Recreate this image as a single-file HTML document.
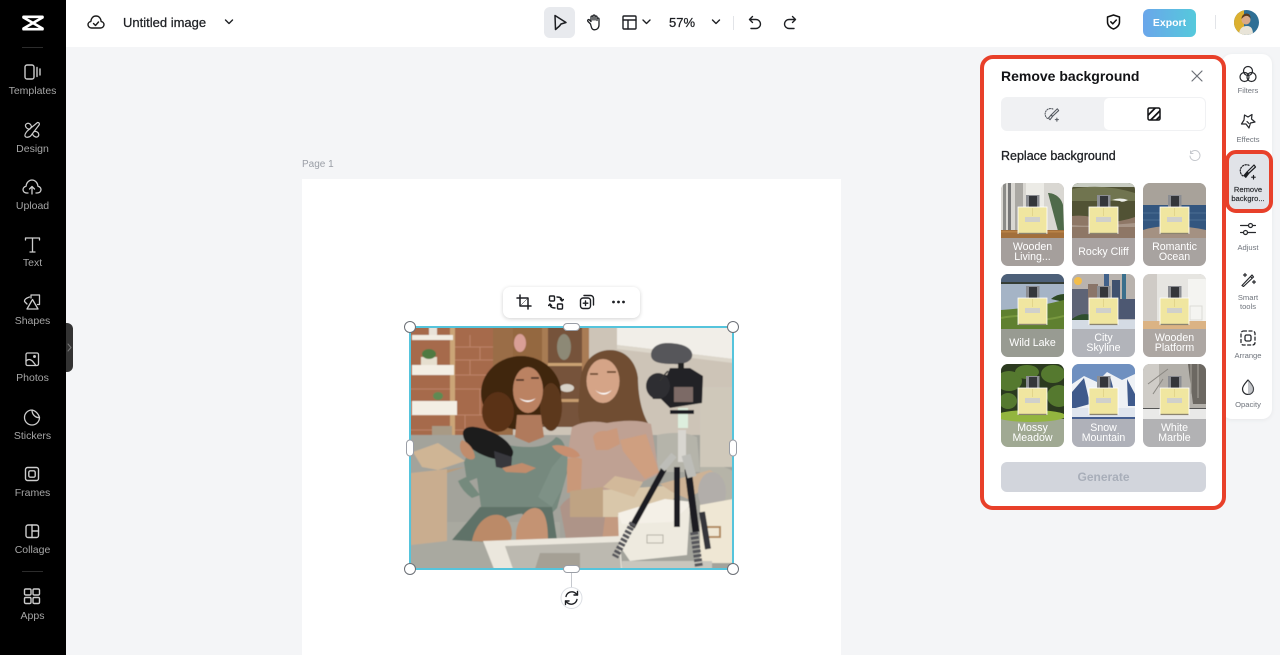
<!DOCTYPE html>
<html><head><meta charset="utf-8"><title>Remove background</title>
<style>
*{box-sizing:border-box;margin:0;padding:0}
html,body{width:1280px;height:655px;overflow:hidden;background:#f4f5f7;font-family:"Liberation Sans",sans-serif}
.a{position:absolute}
.side{left:0;top:0;width:66px;height:655px;background:#000}
.sl{position:absolute;left:0;width:65px;text-align:center;font-size:10.5px;color:#a6a6a6;line-height:12px;white-space:nowrap}
.rl{position:absolute;left:1225px;width:46px;text-align:center;font-size:7.6px;color:#6f747c;line-height:8px;white-space:nowrap}
.ic{position:absolute;fill:none;stroke-linecap:round;stroke-linejoin:round}
.th{position:absolute;width:63px;height:83px;border-radius:7px;overflow:hidden}
.th svg{position:absolute;left:0;top:0}
.lb{position:absolute;left:0;right:0;top:55px;height:28px;display:flex;align-items:center;justify-content:center;text-align:center;color:#fff;font-size:10.6px;line-height:10.5px}
</style></head><body>
<svg width="0" height="0" style="position:absolute"><defs>
<symbol id="bt" viewBox="0 0 63 83">
<rect x="25" y="12" width="13.500" height="12" fill="#8b8d92"/>
<rect x="28" y="13" width="8" height="11" fill="#34363a"/>
<rect x="17" y="24" width="29" height="26.500" fill="#f0e6a0" stroke="#fff" stroke-width=".8"/>
<rect x="17.500" y="49.800" width="28" height="1.300" fill="#8b8470"/>
<rect x="24" y="34" width="15" height="5" fill="#d0d0cb"/>
<line x1="31.500" y1="25" x2="31.500" y2="33" stroke="#cdbb6c" stroke-width=".4"/>
</symbol></defs></svg>

<!-- sidebar -->
<div class="a side"></div>
<svg class="a" style="left:21px;top:14px" width="24" height="18" viewBox="0 0 24 18"><g fill="none" stroke="#fff" stroke-width="2.600" stroke-linecap="round"><path d="M2.500 2.800H21.500M2.500 15.200H21.500M2.500 3.500 21.500 14.500M21.500 3.500 2.500 14.500"/></g></svg>
<div class="a" style="left:22px;top:47px;width:21px;height:1px;background:#2c2c2c"></div>
<div class="a" style="left:22px;top:571px;width:21px;height:1px;background:#2c2c2c"></div>

<svg class="ic" style="left:23px;top:63px" width="20" height="18" viewBox="0 0 20 18" stroke="#ccc" stroke-width="1.400"><rect x="2" y="2" width="9" height="14" rx="2"/><path d="M14 4.500v9M17 6v6"/></svg>
<div class="sl" style="top:85px">Templates</div>
<svg class="ic" style="left:23px;top:121px" width="18" height="18" viewBox="0 0 18 18" stroke="#ccc" stroke-width="1.200"><path d="M4 2.500C6 1.500 8 3.500 8.500 5.500L7 8C5 8.500 3 7 2.500 5c-.2-1 .5-2 1.500-2.500z"/><path d="M14.500 1.500c1.500-.2 2.200 1 1.700 2.300L8 14.500c-1.500 2-5.500 2.500-6 .5s2-5 4-6.500z"/><path d="M11 10.500c2-.5 4.200.5 4.700 2.500s-1.200 3.500-3 3-3-2-3.200-3.500"/></svg>
<div class="sl" style="top:143px">Design</div>
<svg class="ic" style="left:22px;top:178px" width="20" height="18" viewBox="0 0 20 18" stroke="#ccc" stroke-width="1.300"><path d="M6 15H5c-3 0-4-2-4-3.500S2.500 8.500 4 8.300C4.500 4.500 7 2 10 2s5.500 2.500 6 6.300c1.500.2 3 1.600 3 3.200S18 15 15 15h-1"/><path d="M10 16V9M7.500 11 10 8.500l2.500 2.500"/></svg>
<div class="sl" style="top:200px">Upload</div>
<svg class="ic" style="left:24px;top:236px" width="17" height="18" viewBox="0 0 17 18" stroke="#ccc" stroke-width="1.300"><path d="M1.500 4V2h14v2M8.500 2v14M6 16h5"/></svg>
<div class="sl" style="top:257px">Text</div>
<svg class="ic" style="left:23px;top:293px" width="18" height="18" viewBox="0 0 18 18" stroke="#ccc" stroke-width="1.300"><path d="M8 5V2h8.500v9.500h-2M6.500 4C3.500 5 1 6.500 1.500 8.500L4 11"/><path d="M9.500 6.500 15 16H4z"/></svg>
<div class="sl" style="top:315px">Shapes</div>
<svg class="ic" style="left:24px;top:351px" width="16" height="16" viewBox="0 0 16 16" stroke="#ccc" stroke-width="1.300"><rect x="2" y="2" width="12.500" height="12.500" rx="1.500"/><path d="M2 10c3-3 6-1 8 2l2 2.500"/><circle cx="10.500" cy="5.500" r=".8" fill="#ccc"/></svg>
<div class="sl" style="top:372px">Photos</div>
<svg class="ic" style="left:23px;top:408px" width="18" height="18" viewBox="0 0 18 18" stroke="#ccc" stroke-width="1.300"><path d="M9 2a7.500 7.500 0 1 0 7.500 7.500C12.500 10 9 6.500 9 2zM9 2c3 .5 6.500 3.500 7.500 7.500"/></svg>
<div class="sl" style="top:430px">Stickers</div>
<svg class="ic" style="left:24px;top:466px" width="16" height="16" viewBox="0 0 16 16" stroke="#ccc" stroke-width="1.400"><rect x="1.500" y="1.500" width="13" height="13" rx="2"/><rect x="4.800" y="4.800" width="6.400" height="6.400" rx="1.500"/></svg>
<div class="sl" style="top:487px">Frames</div>
<svg class="ic" style="left:24px;top:523px" width="16" height="16" viewBox="0 0 16 16" stroke="#ccc" stroke-width="1.400"><rect x="2" y="2" width="12.500" height="12.500" rx="2"/><path d="M8 2v12.500M8 8h6.500"/></svg>
<div class="sl" style="top:544px">Collage</div>
<svg class="ic" style="left:23px;top:588px" width="18" height="17" viewBox="0 0 18 17" stroke="#ccc" stroke-width="1.400"><rect x="1.500" y="1" width="6.500" height="6" rx="1.200"/><rect x="10" y="1" width="6.500" height="6" rx="1.200"/><rect x="1.500" y="9.500" width="6.500" height="6" rx="1.200"/><rect x="10" y="9.500" width="6.500" height="6" rx="1.200"/></svg>
<div class="sl" style="top:610px">Apps</div>
<div class="a" style="left:66px;top:323px;width:7px;height:49px;background:#333;border-radius:0 6px 6px 0"></div>
<svg class="ic" style="left:67px;top:343px" width="5" height="9" viewBox="0 0 5 9" stroke="#777" stroke-width="1"><path d="M1 1l3 3.500L1 8"/></svg>

<!-- top bar -->
<div class="a" style="left:66px;top:0;width:1214px;height:47px;background:#fff"></div>
<svg class="ic" style="left:87px;top:14px" width="18" height="16" viewBox="0 0 18 16" stroke="#1a1a1a" stroke-width="1.400"><path d="M4.500 14C2.500 14 1 12.500 1 10.800S2.300 7.800 3.800 7.600C4.200 4 6.300 2 9 2s4.800 2 5.200 5.600c1.500.2 2.800 1.500 2.800 3.200S15.500 14 13.500 14z"/><path d="M6.500 9.500 8.500 11.500 11.500 8"/></svg>
<div class="a" style="left:123px;top:15px;font-size:13px;line-height:16px;color:#1d1f23;-webkit-text-stroke:.25px #1d1f23;white-space:nowrap">Untitled image</div>
<svg class="ic" style="left:224px;top:18px" width="10" height="8" viewBox="0 0 10 8" stroke="#1d1f23" stroke-width="1.400"><path d="M1.500 2 5 5.500 8.500 2"/></svg>
<div class="a" style="left:544px;top:7px;width:31px;height:31px;background:#e8eaee;border-radius:6px"></div>
<svg class="ic" style="left:552px;top:14px" width="16" height="17" viewBox="0 0 16 17" stroke="#1d1f23" stroke-width="1.500"><path d="M3 1.500 14 8.500 9 10 7.500 12 3.500 15.500z"/></svg>
<svg class="ic" style="left:586px;top:14px" width="16" height="17" viewBox="0 0 16 17" stroke="#1d1f23" stroke-width="1.300"><path d="M4.500 10 2 7.500C1 6 2.500 5 3.500 6L5 7.500V3c0-1.300 2-1.300 2 0v3-4c0-1.300 2-1.300 2 0v4-3c0-1.300 2-1.300 2 0v3.500-1.500c0-1.300 2-1.300 2 0v6c0 3-2 4.800-4.500 4.800S5.500 14 4.500 10z"/></svg>
<svg class="ic" style="left:622px;top:15px" width="15" height="15" viewBox="0 0 15 15" stroke="#1d1f23" stroke-width="1.400"><rect x="1" y="1" width="13" height="13" rx="1"/><path d="M1 5h13M6 5v9"/></svg>
<svg class="ic" style="left:642px;top:18px" width="9" height="8" viewBox="0 0 9 8" stroke="#1d1f23" stroke-width="1.400"><path d="M1 2l3.500 3.500L8 2"/></svg>
<div class="a" style="left:669px;top:15px;font-size:13px;line-height:16px;color:#1d1f23;-webkit-text-stroke:.25px #1d1f23">57%</div>
<svg class="ic" style="left:711px;top:18px" width="10" height="8" viewBox="0 0 10 8" stroke="#1d1f23" stroke-width="1.400"><path d="M1.500 2 5 5.500 8.500 2"/></svg>
<div class="a" style="left:733px;top:16px;width:1px;height:14px;background:#e2e4e8"></div>
<svg class="ic" style="left:748px;top:15px" width="14" height="15" viewBox="0 0 14 15" stroke="#1d1f23" stroke-width="1.400"><path d="M4.500 1.500 1.500 4.500l3 3M1.500 4.500H8a4.500 4.500 0 0 1 0 9H3"/></svg>
<svg class="ic" style="left:783px;top:15px" width="14" height="15" viewBox="0 0 14 15" stroke="#1d1f23" stroke-width="1.400"><path d="M9.500 1.500l3 3-3 3M12.500 4.500H6a4.500 4.500 0 0 0 0 9h5"/></svg>
<svg class="ic" style="left:1106px;top:14px" width="15" height="16" viewBox="0 0 15 16" stroke="#111" stroke-width="1.500"><path d="M7.500 1 13.500 3v5c0 3.500-3 6-6 7-3-1-6-3.500-6-7V3z"/><path d="M4.800 7.800 6.800 9.800 10.300 6"/></svg>
<div class="a" style="left:1143px;top:9px;width:53px;height:28px;border-radius:6px;background:linear-gradient(90deg,#6aa6ea,#55c9dc);color:#fff;font-size:10.500px;font-weight:bold;line-height:28px;text-align:center">Export</div>
<div class="a" style="left:1215px;top:15px;width:1px;height:14px;background:#e2e4e8"></div>
<svg class="a" style="left:1234px;top:10px" width="25" height="25" viewBox="0 0 25 25"><defs><clipPath id="av"><circle cx="12.500" cy="12.500" r="12.500"/></clipPath></defs><g clip-path="url(#av)"><rect width="25" height="25" fill="#2f6f95"/><rect width="10" height="25" fill="#dcb030"/><path d="M5 25c0-6 3-9 8-9s6 4 6 9z" fill="#e8e4d8"/><circle cx="12" cy="10" r="4.500" fill="#d9a988"/><path d="M7.500 9c0-4 3-5.500 5-5.500s4.500 1.500 4 5c-1-2-3-3-5-2.500S8.500 8 7.500 9z" fill="#5a3c22"/></g></svg>

<!-- page -->
<div class="a" style="left:302px;top:159px;font-size:10px;line-height:12px;color:#9a9ea6">Page 1</div>
<div class="a" style="left:302px;top:179px;width:539px;height:476px;background:#fff"></div>

<!-- photo -->
<svg class="a" style="left:410px;top:327px" width="323" height="242" viewBox="0 0 323 242">
<defs><filter id="bl" x="-5%" y="-5%" width="110%" height="110%"><feGaussianBlur stdDeviation=".6"/></filter></defs>
<g filter="url(#bl)">
<!-- walls -->
<rect width="323" height="242" fill="#cdc4b7"/>
<polygon points="207,0 323,0 323,32 207,18" fill="#f1eee8"/>
<polygon points="207,18 323,32 323,36 207,22" fill="#dcd6ca"/>
<rect x="0" width="85" height="130" fill="#a66a4c"/>
<g stroke="#bd8468" stroke-width="1"><path d="M43 20h42M43 33h42M43 48h42M0 62h85M0 88h85M0 103h85M60 8v12M70 20v13M60 33v15M70 62v26M55 88v15"/></g>
<rect x="83" width="20" height="110" fill="#9a6d47"/>
<rect x="103" width="75" height="100" fill="#76533a"/>
<rect x="132" width="6" height="60" fill="#a87b52"/>
<rect x="103" width="29" height="40" fill="#946840"/>
<rect x="138" y="36" width="40" height="3" fill="#cba273"/>
<rect x="138" y="72" width="34" height="3" fill="#c69b6e"/>
<rect x="172" width="7" height="85" fill="#a97c55"/>
<ellipse cx="154" cy="20" rx="7" ry="13" fill="#8d8976"/>
<ellipse cx="157" cy="61" rx="7" ry="4" fill="#d8d2c8"/>
<ellipse cx="110" cy="16" rx="6" ry="9" fill="#d99f96"/>
<!-- left shelves -->
<rect x="40" y="0" width="5" height="115" fill="#cba577"/>
<rect x="2" y="8" width="41" height="5" fill="#f1ece2"/>
<rect x="2" y="38" width="42" height="10" fill="#f3eee4"/>
<rect x="2" y="74" width="45" height="14" fill="#f3eee4"/>
<rect x="11" y="30" width="16" height="8" fill="#e6dfcf"/><ellipse cx="19" cy="27" rx="7" ry="5" fill="#4f7a42"/>
<ellipse cx="28" cy="69" rx="5" ry="4" fill="#5f8a52"/>
<rect x="22" y="99" width="20" height="12" fill="#a89a85"/>
<rect x="19" y="0" width="8" height="8" fill="#e8e2d8"/>
<!-- sofa -->
<rect x="0" y="108" width="323" height="134" fill="#a3a39b"/>
<rect x="0" y="195" width="150" height="47" fill="#a9a9a0"/>
<path d="M247 108q25-5 40 2l3 35h-43z" fill="#b5b4aa"/>
<path d="M290 140q20-4 33 4v36h-33z" fill="#b6b4a8"/>
<rect x="290" y="60" width="33" height="80" fill="#cfc8ba"/>
<!-- left woman -->
<ellipse cx="111" cy="66" rx="40" ry="37" fill="#41250f"/>
<ellipse cx="88" cy="85" rx="16" ry="20" fill="#5a3218"/>
<ellipse cx="141" cy="80" rx="11" ry="24" fill="#5c371c"/>
<path d="M107 88h24l3 22-15 6-14-6z" fill="#b07a5b"/>
<ellipse cx="118" cy="63" rx="15" ry="23" fill="#bb8262"/>
<path d="M109 71q9 5 17 0q-8 8-17 0z" fill="#fff"/>
<path d="M106 53h8M121 51h8" stroke="#3a2416" stroke-width="1.500"/>
<!-- right woman -->
<path d="M170 60c0-26 15-37 30-37 16 0 26 12 28 28 0 18 4 35 10 45l-35 3-32-1c-5-12-2-26-1-38z" fill="#6f4e33"/>
<ellipse cx="193" cy="54" rx="16.500" ry="22" fill="#d5a487"/>
<path d="M185 63q8 6 17 0q-8 9-17 0z" fill="#fff"/>
<path d="M180 47h8M197 45h9" stroke="#5a3a22" stroke-width="1.500"/>
<!-- right woman dress -->
<path d="M162 100q15-8 35-4 28-5 44 1l8 50-32 15-35 8-20-6-5-34z" fill="#bfa193"/>
<path d="M150 180q8-12 20-12l40 2-2 42h-52z" fill="#ae9488"/>
<path d="M157 132q8-3 15 0l-1 32-14 2z" fill="#c99879"/>
<path d="M210 113l26-6 13 38-14 7-22-28z" fill="#cf9f80"/>
<path d="M183 110q3-7 14-6l10-3 3 16-12 6h-12z" fill="#cb997b"/>
<!-- left woman dress -->
<path d="M82 112q12 8 38 8 18 0 26-10 8 2 10 14l1 22-10 35-6 6H72l-5-36-10 4-3-20q8-19 28-23z" fill="#76897e"/>
<path d="M56 150l-8 4q4 10 14 17l8-3z" fill="#748a7d"/>
<path d="M157 122q2 20-4 38l-11 20-14-10 14-30z" fill="#7e9186"/>
<path d="M70 180h72l5 33-20 1-15-28-15 4-20 25-35-2z" fill="#5f7268"/>
<!-- legs -->
<path d="M62 214c3-16 14-28 27-26 10 2 13 12 13 20l-2 8z" fill="#bb8a68"/>
<path d="M106 206c2-16 12-26 20-25 9 1 12 14 12 32l-32 1z" fill="#c49373"/>
<path d="M195 190c8-2 14 0 20 4l-6 22-17-2z" fill="#c49a80"/>
<!-- hat -->
<path d="M53 108c-1-6 4-9 12-8 16 2 34 12 38 24 1 6-4 9-8 9-16 0-40-10-42-25z" fill="#1c1c1e"/>
<path d="M84 124l18 6-1 13-15-3z" fill="#37373c"/>
<path d="M52 113c-3 3-3 11 2 16 4 4 10 5 11 1-1-8-6-14-13-17z" fill="#c08c6c"/>
<path d="M92 141l20-5 14 5-10 5-20-1z" fill="#c08c6c"/>
<path d="M142 119c7-3 26 2 28 10-6 4-22 0-28-10z" fill="#c88f70"/>
<!-- boxes -->
<polygon points="1,146 37,142 37,214 1,218" fill="#c9ad8f"/>
<polygon points="3,125 28,116 55,134 28,143 12,140" fill="#cfb595"/>
<polygon points="37,143 55,140 37,146" fill="#b89b7b"/>
<polygon points="160,164 193,160 193,190 160,190" fill="#bfa383"/>
<polygon points="193,163 270,158 255,190 193,190" fill="#d9c7aa"/>
<polygon points="193,160 205,149 233,155 224,170" fill="#d2b99a"/>
<polygon points="250,157 300,143 312,150 278,172 262,165" fill="#cdb295"/>
<ellipse cx="302" cy="165" rx="14" ry="20" fill="#b2aeaa"/>
<!-- white boxes -->
<polygon points="208,188 255,172 280,178 277,228 220,234 209,218" fill="#eeeadf"/>
<polygon points="208,186 255,172 283,175 262,195 212,197" fill="#f4f0e7"/>
<rect x="237" y="208" width="16" height="8" fill="none" stroke="#b4b0a6"/>
<polygon points="290,178 323,172 323,236 290,236" fill="#efe7d4"/>
<rect x="296" y="200" width="14" height="10" fill="none" stroke="#b0885c" stroke-width="2"/>
<!-- table -->
<polygon points="73,214 210,209 212,242 84,242" fill="#ebe7dd"/>
<polygon points="95,219 209,215 211,242 103,242" fill="#bcb9b0"/>
<path d="M130 226h40v16h-45z" fill="#a5a095"/>
<rect x="212" y="234" width="90" height="8" fill="#c9c6bd"/>
<!-- tripod -->
<g stroke-linecap="butt" fill="none">
<path d="M254 142 222 200" stroke="#1e1e20" stroke-width="6"/>
<path d="M223 196 205 230" stroke="#55555a" stroke-width="7" stroke-dasharray="3 1.500"/>
<path d="M267 140V200" stroke="#1e1e20" stroke-width="6"/>
<path d="M278 142 286 205" stroke="#1e1e20" stroke-width="7"/>
<path d="M284 205 289 240" stroke="#55555a" stroke-width="8" stroke-dasharray="3 1.500"/>
<path d="M292 185 298 222" stroke="#35353a" stroke-width="6"/>
<path d="M272 103V135" stroke="#d8d6d0" stroke-width="8"/>
<path d="M264 128 252 142" stroke="#bdbdb8" stroke-width="7"/>
<path d="M276 128 282 150" stroke="#bdbdb8" stroke-width="9"/>
</g>
<rect x="268" y="81" width="10" height="20" fill="#ded" />
<!-- camera -->
<path d="M242 48h15l3-7h20l13 8-1 27-32 5-9-9h-8l-6-12z" fill="#232326"/>
<ellipse cx="248" cy="59" rx="12" ry="13" fill="#2f2f33"/>
<rect x="264" y="60" width="19" height="15" fill="#7b6a66"/>
<path d="M241 28c0-8 8-12 16-12 12 0 23 3 25 10 2 8-8 12-18 11-12 0-23-1-23-9z" fill="#56565a"/>
<rect x="268" y="36" width="6" height="7" fill="#222"/>
<path d="M258 44q-5 5-8 10" stroke="#333" stroke-width="1.500" fill="none"/>
<rect x="260" y="83" width="24" height="4" fill="#1d1d20"/>
</g></svg>
<!-- selection -->
<div class="a" style="left:409px;top:326px;width:325px;height:244px;border:2px solid #55c4dc"></div>
<svg class="a" style="left:400px;top:317px" width="345" height="300" viewBox="0 0 345 300">
<g fill="#fff" stroke="#6b6f76" stroke-width="1">
<circle cx="10" cy="10" r="5.500"/><circle cx="333" cy="10" r="5.500"/><circle cx="10" cy="252" r="5.500"/><circle cx="333" cy="252" r="5.500"/>
</g>
<g fill="#fff" stroke="#9a9ea6" stroke-width="1">
<rect x="163.500" y="6.500" width="16" height="7" rx="3.500"/><rect x="163.500" y="248.500" width="16" height="7" rx="3.500"/>
<rect x="6.500" y="123" width="7" height="16" rx="3.500"/><rect x="329.500" y="123" width="7" height="16" rx="3.500"/>
</g>
<line x1="171.500" y1="256" x2="171.500" y2="271" stroke="#c5c8ce"/>
<circle cx="171.500" cy="281" r="10.500" fill="#fff" stroke="#dcdfe4"/>
<g fill="none" stroke="#1d1f23" stroke-width="1.400" stroke-linecap="round" stroke-linejoin="round"><path d="M166 279.500a6 6 0 0 1 10-3l1.500 1.500M177 282.500a6 6 0 0 1-10 3l-1.500-1.500"/><path d="M177.500 274.500v3.500h-3.500M165.500 287.500V284h3.500"/></g>
</svg>
<!-- floating bar -->
<div class="a" style="left:503px;top:287px;width:137px;height:31px;background:#fff;border-radius:7px;box-shadow:0 1px 4px rgba(0,0,0,.18)"></div>
<svg class="ic" style="left:516px;top:294px" width="16" height="16" viewBox="0 0 16 16" stroke="#1d1f23" stroke-width="1.500"><path d="M4 1v11h11M1 4h11v11"/><path d="M5 11 11 5" stroke-width=".5"/></svg>
<svg class="ic" style="left:548px;top:295px" width="16" height="15" viewBox="0 0 16 15" stroke="#1d1f23" stroke-width="1.400"><rect x="1.500" y="1" width="5" height="5" rx="1"/><rect x="9.500" y="9" width="5" height="5" rx="1"/><path d="M9 2c3 0 5 1 5 4M12.500 4.500 14 6l1.500-1.500M7 13c-3 0-5-1-5-4M.500 10.500 2 9l1.500 1.500"/></svg>
<svg class="ic" style="left:579px;top:294px" width="16" height="16" viewBox="0 0 16 16" stroke="#1d1f23" stroke-width="1.400"><rect x="1.500" y="4" width="10" height="10.500" rx="2.500"/><path d="M5 1.500h6.500a3 3 0 0 1 3 3V11M6.500 7v4.500M4.300 9.200h4.500"/></svg>
<svg class="a" style="left:611px;top:299px" width="15" height="6" viewBox="0 0 15 6" fill="#1d1f23"><circle cx="2.500" cy="3" r="1.400"/><circle cx="7.500" cy="3" r="1.400"/><circle cx="12.500" cy="3" r="1.400"/></svg>

<!-- right toolbar -->
<div class="a" style="left:1222px;top:54px;width:50px;height:365px;background:#fff;border-radius:10px;box-shadow:0 1px 5px rgba(0,0,0,.06)"></div>
<svg class="ic" style="left:1239px;top:65px" width="18" height="18" viewBox="0 0 18 18" stroke="#26282c" stroke-width="1.200"><circle cx="9" cy="6" r="4.500"/><circle cx="5.500" cy="12" r="4.500"/><circle cx="12.500" cy="12" r="4.500"/></svg>
<div class="rl" style="top:87px">Filters</div>
<svg class="ic" style="left:1240px;top:113px" width="16" height="17" viewBox="0 0 16 17" stroke="#26282c" stroke-width="1.200"><path d="M4.500 2 8 4l4-2.500-.5 4.500 3.500 3-4.500 1-1.500 5-3-4-4.500 0 2.500-4z"/><path d="M7 8.500l2 2"/></svg>
<div class="rl" style="top:136px">Effects</div>
<div class="a" style="left:1225px;top:150px;width:48px;height:63px;border:4.500px solid #e8402a;border-radius:11px;background:#e1e3e8"></div>
<svg class="ic" style="left:1239px;top:163px" width="18" height="18" viewBox="0 0 18 18" stroke="#1d1f23" stroke-width="1.200"><path d="M10 2.300A6 6 0 0 0 4.800 13.400" stroke-dasharray="1.300 1.500"/><path d="M15 2 8 9l1.500 1.500L16.500 4z"/><path d="M8 9 5 12.500 6.800 14.300 9.700 10.500z" fill="#1d1f23"/><path d="M14.500 12.500v3.500M12.700 14.200h3.500"/></svg>
<div class="rl" style="top:186px;color:#25272b;-webkit-text-stroke:.15px #25272b">Remove</div>
<div class="rl" style="top:195px;color:#25272b;-webkit-text-stroke:.15px #25272b">backgro...</div>
<svg class="ic" style="left:1240px;top:221px" width="16" height="16" viewBox="0 0 16 16" stroke="#26282c" stroke-width="1.200"><path d="M.500 4.500h8M12.500 4.500h3M.500 11.500h3M7.500 11.500h8"/><circle cx="10.500" cy="4.500" r="2"/><circle cx="5.500" cy="11.500" r="2"/></svg>
<div class="rl" style="top:244px">Adjust</div>
<svg class="ic" style="left:1240px;top:271px" width="16" height="16" viewBox="0 0 16 16" stroke="#26282c" stroke-width="1.200"><path d="M12 4 2 14.500 3.500 15.500 13.500 6z"/><path d="M10.500 5.500 12 7"/><path d="M5 2.500v3M3.500 4h3M14 9.500v3M12.500 11h3"/></svg>
<div class="rl" style="top:294px">Smart</div>
<div class="rl" style="top:303px">tools</div>
<svg class="ic" style="left:1240px;top:330px" width="16" height="16" viewBox="0 0 16 16" stroke="#26282c" stroke-width="1.300"><rect x="1" y="1" width="14" height="14" rx="2.500" stroke-dasharray="3 2.500"/><rect x="5" y="5" width="6" height="6" rx="1.500"/></svg>
<div class="rl" style="top:352px">Arrange</div>
<svg class="ic" style="left:1241px;top:379px" width="14" height="16" viewBox="0 0 14 16" stroke="#26282c" stroke-width="1.200"><path d="M7 1C5 3.500 1.500 6.500 1.500 10a5.500 5.500 0 0 0 11 0C12.500 6.500 9 3.500 7 1z"/><path d="M7 1c2 2.500 5.500 5.500 5.500 9A5.500 5.500 0 0 1 7 15.500z" fill="#9a9da3" stroke="none" opacity=".6"/></svg>
<div class="rl" style="top:401px">Opacity</div>

<!-- panel -->
<div class="a" style="left:980px;top:55px;width:246px;height:455px;background:#fff;border:4.500px solid #e8402a;border-radius:13px"></div>
<div class="a" style="left:1001px;top:68px;font-size:14px;line-height:17px;font-weight:bold;color:#121316;white-space:nowrap">Remove background</div>
<svg class="ic" style="left:1191px;top:70px" width="12" height="12" viewBox="0 0 12 12" stroke="#6c7077" stroke-width="1.200"><path d="M1 1l10 10M11 1 1 11"/></svg>
<div class="a" style="left:1001px;top:97px;width:205px;height:34px;background:#f0f1f3;border-radius:6px"></div>
<div class="a" style="left:1104px;top:98px;width:101px;height:32px;background:#fff;border-radius:5px"></div>
<svg class="ic" style="left:1044px;top:107px" width="16" height="16" viewBox="0 0 18 18" stroke="#555a61" stroke-width="1.200"><path d="M10 2.300A6 6 0 0 0 4.800 13.400" stroke-dasharray="1.300 1.500"/><path d="M15 2 8 9l1.500 1.500L16.500 4z"/><path d="M8 9 5 12.500 6.800 14.300 9.700 10.500z"/><path d="M14.500 12.500v3.500M12.700 14.200h3.500"/></svg>
<svg class="a" style="left:1147px;top:107px" width="14" height="14" viewBox="0 0 14 14"><rect x="1" y="1" width="12" height="12" rx="1.500" fill="#fff" stroke="#121316" stroke-width="1.500"/><path d="M1 7 7 1h2.500L1 9.500zM2.500 13 13 2.500V5L5 13zM8 13l5-5v2.500L10.500 13z" fill="#121316"/></svg>
<div class="a" style="left:1001px;top:148px;font-size:12.500px;line-height:16px;color:#1d1f23;-webkit-text-stroke:.3px #1d1f23;white-space:nowrap">Replace background</div>
<svg class="ic" style="left:1189px;top:150px" width="12" height="12" viewBox="0 0 12 12" stroke="#c4c7cc" stroke-width="1"><path d="M2 2.500A5 5 0 1 1 1 6"/><path d="M1.500 1v2.500H4"/></svg>

<!-- thumbnails -->
<div class="th" style="left:1001px;top:183px;background:#a59f9c"><svg width="63" height="83" viewBox="0 0 63 83"><rect width="63" height="55" fill="#d9d7d2"/><rect x="2" width="3" height="48" fill="#8b8b88"/><rect x="7" width="3" height="48" fill="#777"/><rect x="14" width="8" height="48" fill="#aaa8a3"/><rect x="25" width="18" height="48" fill="#ecebe6"/><path d="M47 10c6 0 13 4 15 12l1 26-6 0z" fill="#4f6a4a"/><rect y="47" width="63" height="8" fill="#a26f3b"/><rect y="48" width="63" height="1.500" fill="#b98347"/><use href="#bt" width="63" height="83"/></svg><div class="lb">Wooden<br>Living...</div></div>
<div class="th" style="left:1072px;top:183px;background:#a9a3a2"><svg width="63" height="83" viewBox="0 0 63 83"><rect width="63" height="55" fill="#515234"/><rect width="63" height="4" fill="#c8ccc2"/><path d="M0 6q30-6 63 4v8H0z" fill="#70744f"/><path d="M40 17q8-3 16 0-6 3-8 1z" fill="#eef0ea"/><path d="M0 33q18-2 32 6 18 0 31-5v21H0z" fill="#8e7766"/><path d="M0 42q20 2 63-2v4H0z" fill="#a89688"/><use href="#bt" width="63" height="83"/></svg><div class="lb">Rocky Cliff</div></div>
<div class="th" style="left:1143px;top:183px;background:#a8a3a0"><svg width="63" height="83" viewBox="0 0 63 83"><rect width="63" height="22" fill="#a8a29a"/><rect y="22" width="63" height="25" fill="#33567f"/><path d="M0 30h63M0 37h63" stroke="#4b6e93" stroke-width="1"/><path d="M0 47q25-8 63 0v8H0z" fill="#a49182"/><use href="#bt" width="63" height="83"/></svg><div class="lb">Romantic<br>Ocean</div></div>

<div class="th" style="left:1001px;top:274px;background:#989b92"><svg width="63" height="83" viewBox="0 0 63 83"><rect width="63" height="9" fill="#4d6079"/><rect y="8" width="63" height="2" fill="#353d35"/><rect y="10" width="63" height="26" fill="#a5b4c6"/><path d="M50 25q6-5 13-5v8z" fill="#2e4a24"/><path d="M0 36q32-2 63-10v29H0z" fill="#5f8030"/><path d="M0 44q20-4 30 0t33-2" stroke="#78983f" fill="none" stroke-width="2"/><use href="#bt" width="63" height="83"/></svg><div class="lb">Wild Lake</div></div>
<div class="th" style="left:1072px;top:274px;background:#b2b4ba"><svg width="63" height="83" viewBox="0 0 63 83"><rect width="63" height="45" fill="#b9b3ae"/><circle cx="6" cy="7" r="4" fill="#f3bd4a"/><rect x="32" width="5" height="25" fill="#41618a"/><rect x="50" width="4" height="28" fill="#3a6f8c"/><rect x="40" y="6" width="8" height="25" fill="#40516f"/><rect x="0" y="15" width="20" height="30" fill="#5e6476"/><rect x="16" y="10" width="10" height="30" fill="#8a7569"/><rect x="40" y="25" width="23" height="20" fill="#4d5872"/><path d="M0 45q10-8 22-3v5H0z" fill="#2f4f2e"/><rect y="46" width="63" height="9" fill="#d4dbe4"/><use href="#bt" width="63" height="83"/></svg><div class="lb">City<br>Skyline</div></div>
<div class="th" style="left:1143px;top:274px;background:#ada7a3"><svg width="63" height="83" viewBox="0 0 63 83"><rect width="63" height="48" fill="#e6e5e1"/><rect x="0" width="14" height="48" fill="#cfcbc6"/><rect x="45" y="5" width="18" height="43" fill="#f4f4f1"/><rect x="47" y="32" width="12" height="14" fill="none" stroke="#dcdbd6"/><rect y="47" width="63" height="8" fill="#dbb384"/><use href="#bt" width="63" height="83"/></svg><div class="lb">Wooden<br>Platform</div></div>

<div class="th" style="left:1001px;top:364px;background:#a0a993"><svg width="63" height="83" viewBox="0 0 63 83"><rect width="63" height="55" fill="#2b3a1f"/><g fill="#55792f"><ellipse cx="8" cy="17" rx="13" ry="10"/><ellipse cx="26" cy="8" rx="12" ry="7"/><ellipse cx="52" cy="10" rx="12" ry="9"/><ellipse cx="58" cy="32" rx="12" ry="11"/><ellipse cx="7" cy="37" rx="9" ry="8"/></g><ellipse cx="30" cy="52" rx="35" ry="6" fill="#93b53f"/><use href="#bt" width="63" height="83"/></svg><div class="lb">Mossy<br>Meadow</div></div>
<div class="th" style="left:1072px;top:364px;background:#afb1b9"><svg width="63" height="83" viewBox="0 0 63 83"><rect width="63" height="30" fill="#6f90c0"/><path d="M0 20 12 12 25 18 35 8 50 16 63 10V45H0z" fill="#eef1f5"/><path d="M0 28 12 14 18 40 0 45zM38 12 46 42H32zM55 15 63 30V42H56z" fill="#3f5a8c"/><rect y="44" width="63" height="11" fill="#dfe5ee"/><rect y="53" width="63" height="2" fill="#445e90"/><use href="#bt" width="63" height="83"/></svg><div class="lb">Snow<br>Mountain</div></div>
<div class="th" style="left:1143px;top:364px;background:#b2b2b4"><svg width="63" height="83" viewBox="0 0 63 83"><rect width="63" height="55" fill="#b3b0aa"/><rect x="0" width="16" height="45" fill="#cfccc7"/><path d="M5 20 25 5M10 30 20 15" stroke="#8a8782" fill="none"/><path d="M45 0h18v40H50z" fill="#6c6862"/><path d="M48 0v30M55 0v34" stroke="#a7a39c"/><rect y="45" width="63" height="10" fill="#e9e9e8"/><rect y="44" width="63" height="1" fill="#555"/><use href="#bt" width="63" height="83"/></svg><div class="lb">White<br>Marble</div></div>

<div class="a" style="left:1001px;top:462px;width:205px;height:30px;background:#d2d5dc;border-radius:6px;color:#a8aeb9;font-size:12px;font-weight:bold;line-height:30px;text-align:center">Generate</div>
</body></html>
